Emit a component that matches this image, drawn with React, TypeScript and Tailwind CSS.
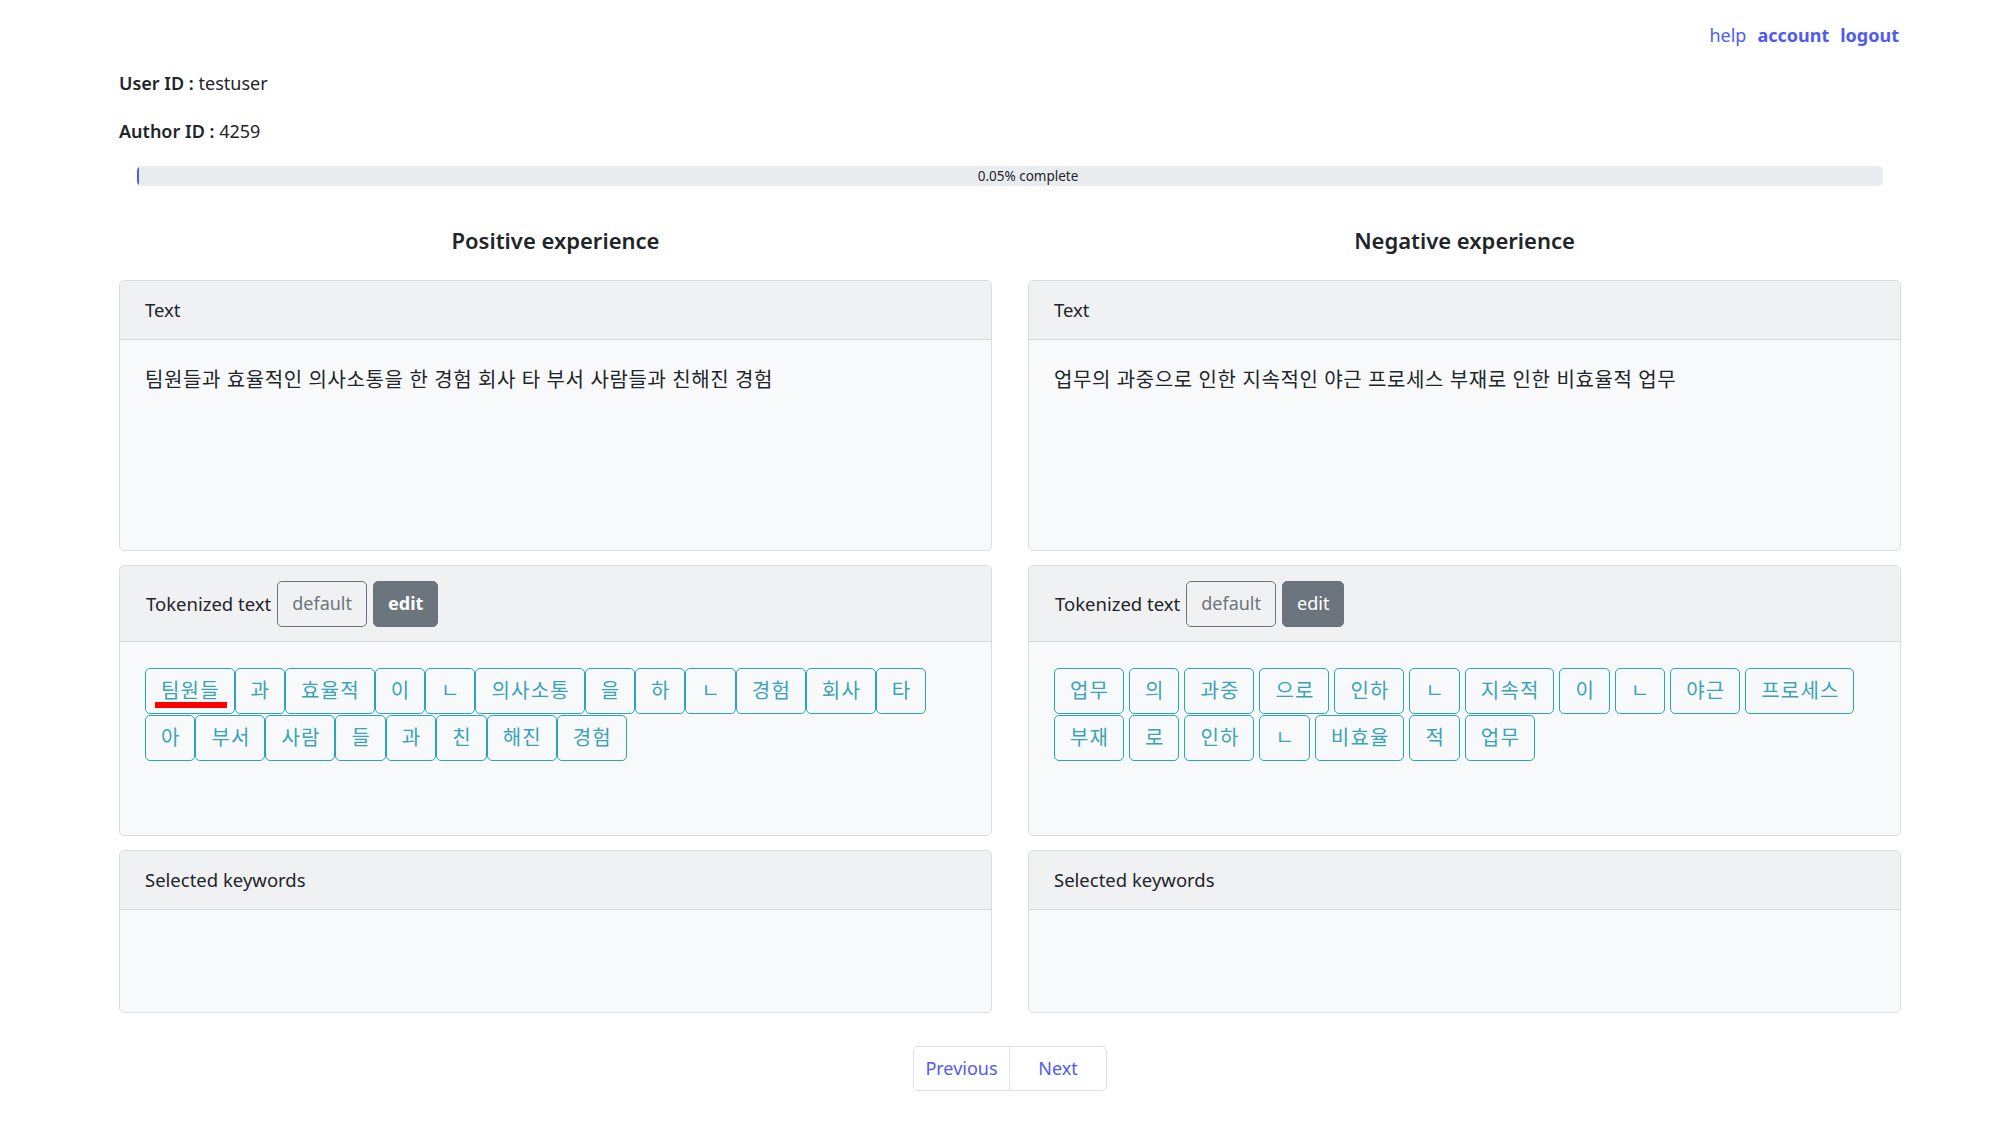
import React from 'react';

const positiveText = '팀원들과 효율적인 의사소통을 한 경험 회사 타 부서 사람들과 친해진 경험';
const negativeText = '업무의 과중으로 인한 지속적인 야근 프로세스 부재로 인한 비효율적 업무';

const positiveTokens = [
  '팀원들', '과', '효율적', '이', 'ㄴ', '의사소통', '을', '하', 'ㄴ', '경험', '회사', '타',
  '아', '부서', '사람', '들', '과', '친', '해진', '경험',
];

const negativeTokens = [
  '업무', '의', '과중', '으로', '인하', 'ㄴ', '지속적', '이', 'ㄴ', '야근', '프로세스',
  '부재', '로', '인하', 'ㄴ', '비효율', '적', '업무',
];

interface TokenProps {
  label: string;
  marked?: boolean;
}

const Token: React.FC<TokenProps> = ({ label, marked }) => (
  <button className="relative h-[46px] rounded-[5px] border border-[#2aa6bc] pl-[15px] pr-[13.8px] text-[20px] leading-[30px] tracking-[1.2px] text-[#3aa3b7]">
    {label}
    {marked && <span className="absolute left-[9px] right-[7px] bottom-[5px] h-[6px] bg-[#ff0000]" />}
  </button>
);

interface CardProps {
  header: React.ReactNode;
  headerClass?: string;
  bodyClass: string;
  children?: React.ReactNode;
}

const Card: React.FC<CardProps> = ({ header, headerClass = 'h-[59px]', bodyClass, children }) => (
  <div className="overflow-hidden rounded-[5px] border border-[#dcdddf] bg-[#f8f9fa]">
    <div className={`flex items-center border-b border-[#d6d7d9] bg-[#f0f1f3] px-[25px] text-[18.5px] ${headerClass}`}>
      {header}
    </div>
    <div className={bodyClass}>{children}</div>
  </div>
);

interface ColumnProps {
  title: string;
  text: string;
  tokens: string[];
  boldEdit: boolean;
  tokenGap: string;
}

const Column: React.FC<ColumnProps> = ({ title, text, tokens, boldEdit, tokenGap }) => (
  <div className="flex w-[873px] flex-col">
    <h5 className="text-center text-[22px] font-semibold leading-[30px] text-[#212529]">{title}</h5>

    <div className="mt-[25px] flex flex-col gap-[14px]">
      {/* Text */}
      <Card header="Text" bodyClass="h-[210px] px-[25px] pt-[25px] text-[20px] leading-[30px] tracking-[0.6px]">
        {text}
      </Card>

      {/* Tokenized text */}
      <Card
        headerClass="h-[76px]"
        header={
          <div className="flex items-center">
            <span className="ml-[1px] mr-[6px]">Tokenized text</span>
            <button className="h-[46px] rounded-[5px] border border-[#6c757d] px-[14px] text-[18px] text-[#6c757d]">
              default
            </button>
            <button
              className={`ml-[6px] h-[46px] rounded-[5px] border border-[#6c757d] bg-[#6c757d] px-[14px] text-[18px] text-white ${boldEdit ? 'font-bold' : ''}`}
            >
              edit
            </button>
          </div>
        }
        bodyClass="h-[193px] px-[25px] pt-[26px]"
      >
        <div className={`flex flex-wrap gap-y-[1px] ${tokenGap}`}>
          {tokens.map((t, i) => (
            <Token key={i} label={t} marked={boldEdit && i === 0} />
          ))}
        </div>
      </Card>

      {/* Selected keywords */}
      <Card header="Selected keywords" bodyClass="h-[102px]" />
    </div>
  </div>
);

export default function App() {
  return (
    <div className="min-h-screen bg-white font-['Noto_Sans','Noto_Sans_CJK_KR',sans-serif] text-[#212529]">
      <div className="ml-[119px] w-[1782px] pt-[20px]">
        {/* Top links */}
        <div className="flex justify-end gap-[11px] pr-[2px] text-[18px] leading-[30px] text-[#4f5bf0]">
          <a href="#">help</a>
          <a href="#" className="font-bold">account</a>
          <a href="#" className="font-bold">logout</a>
        </div>

        <p className="mt-[18px] text-[18px] leading-[30px]">
          <span className="font-semibold">User ID :</span> testuser
        </p>
        <p className="mt-[18px] text-[18px] leading-[30px]">
          <span className="font-semibold">Author ID :</span> 4259
        </p>

        {/* Progress */}
        <div className="mx-[18px] mt-[20px] flex h-[20px] items-center overflow-hidden rounded-[5px] bg-[#e9ecef]">
          <div className="h-full w-[2px] bg-[#4a5cf2]" />
          <span className="flex-1 pl-[34px] text-center text-[13.5px] leading-[20px]">0.05% complete</span>
        </div>

        {/* Columns */}
        <div className="mt-[39px] flex gap-[36px]">
          <Column title="Positive experience" text={positiveText} tokens={positiveTokens} boldEdit tokenGap="gap-x-0" />
          <Column title="Negative experience" text={negativeText} tokens={negativeTokens} boldEdit={false} tokenGap="gap-x-[5px]" />
        </div>

        {/* Pagination */}
        <div className="mt-[33px] flex justify-center">
          <div className="flex h-[45px] overflow-hidden rounded-[5px] border border-[#dee2e6] text-[18px] text-[#4f5bf0]">
            <a href="#" className="flex w-[95px] items-center justify-center">Previous</a>
            <a href="#" className="flex w-[97px] items-center justify-center border-l border-[#dee2e6]">Next</a>
          </div>
        </div>
      </div>
    </div>
  );
}
